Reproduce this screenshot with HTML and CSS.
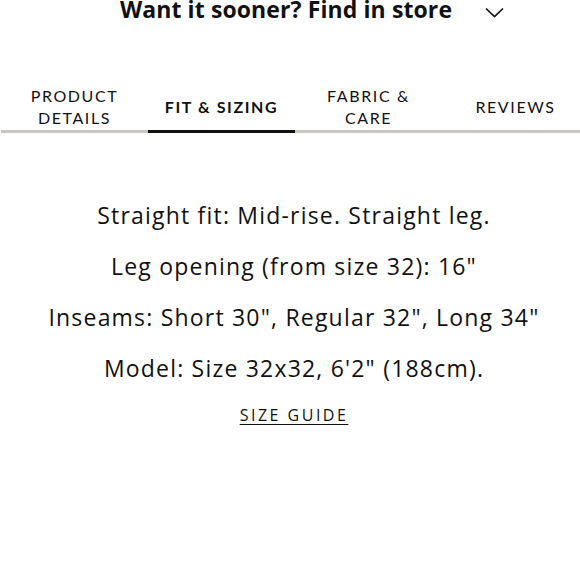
FILE: index.html
```html
<!DOCTYPE html>
<html lang="en">
<head>
<meta charset="utf-8">
<link rel="stylesheet" href="styles.css">
</head>
<body>
<div class="store">
  <span class="store-text">Want it sooner? Find in store</span>
  <svg class="chev" width="19" height="11" viewBox="0 0 19 11"><path d="M1 1.5 L9.5 9.5 L18 1.5" fill="none" stroke="#111" stroke-width="1.7"/></svg>
</div>
<nav class="tabs">
  <div class="tab">PRODUCT<br>DETAILS</div>
  <div class="tab active">FIT &amp; SIZING</div>
  <div class="tab">FABRIC &amp;<br>CARE</div>
  <div class="tab">REVIEWS</div>
</nav>
<section class="fit">
  <p>Straight fit: Mid-rise. Straight leg.</p>
  <p>Leg opening (from size 32): 16"</p>
  <p>Inseams: Short 30", Regular 32", Long 34"</p>
  <p>Model: Size 32x32, 6'2" (188cm).</p>
  <a class="guide" href="#">SIZE GUIDE</a>
</section>
</body>
</html>
```

FILE: styles.css
```css
html, body { margin: 0; padding: 0; background: #fff; overflow: hidden; }
body { font-family: Lato, "Open Sans", sans-serif; color: #111; width: 580px; }
.store {
  display: flex; align-items: flex-start; justify-content: center;
  gap: 33px; padding-left: 44px; height: 18px;
}
.store-text { font-family: "Open Sans", sans-serif; font-size: 23px; font-weight: 700; line-height: 18px; letter-spacing: 0.1px; }
.chev { margin-top: 7px; }
.tabs {
  display: grid; grid-template-columns: repeat(4, 147px);
  margin: 64px 0 0 1px; width: 588px;
  border-bottom: 3px solid #c9c6be;
}
.tab {
  display: flex; align-items: center; justify-content: center;
  text-align: center; font-size: 16px; line-height: 22px; letter-spacing: 1.6px;
  margin-bottom: -3px; border-bottom: 3px solid transparent;
  padding-top: 2px; box-sizing: border-box; height: 51px;
}
.tab.active { font-weight: 700; border-bottom-color: #111; }
.fit { text-align: center; padding: 57px 0 0 8px; font-family: "Open Sans", sans-serif; }
.fit p { margin: 0; font-size: 23px; line-height: 51px; letter-spacing: 1.2px; }
.guide {
  display: inline-block; margin-top: 10px; color: #111;
  font-size: 16px; letter-spacing: 2.5px; text-underline-offset: 3px;
}
```
